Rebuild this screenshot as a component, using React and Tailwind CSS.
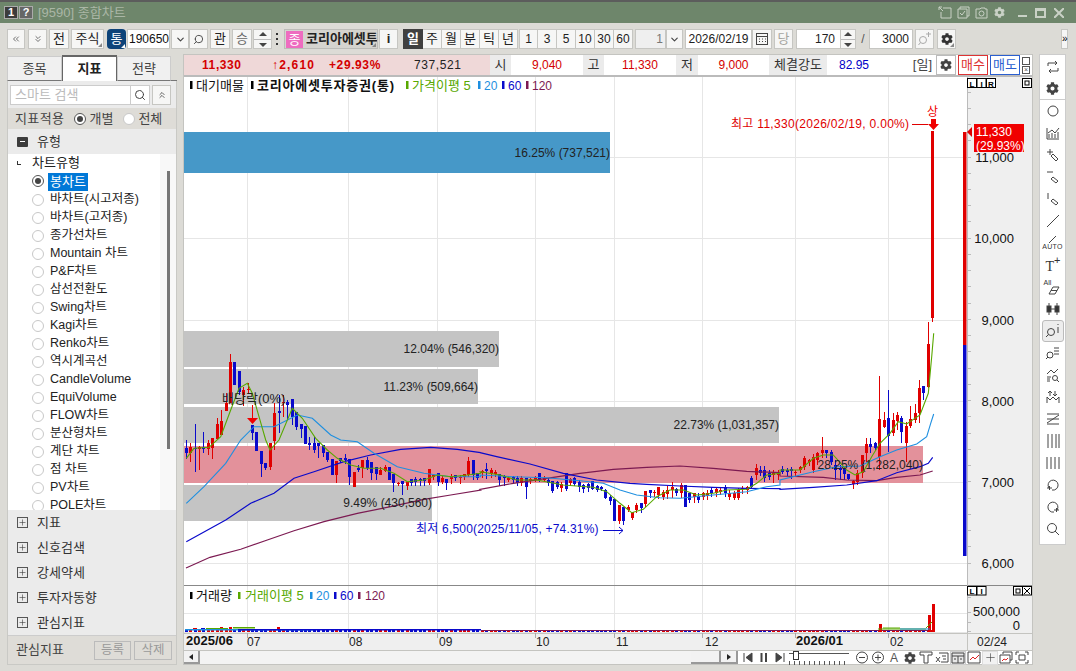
import React from "react";
import { FaCog } from "react-icons/fa";
import { twMerge } from "tailwind-merge";
import { ChevronDown, ChevronsDown, ChevronsLeft, ChevronsUp, Search, Plus } from "lucide-react";

// [red?, bodyTop, bodyBottom, wickTop, wickBottom]
const candles = [
  [0,448,453,440,459],[1,447,453,443,462],[0,448,449,424,472],[1,447,449,446,470],[0,447,449,432,453],
  [1,443,449,440,455],[1,438,448,438,459],[1,424,439,418,439],[1,421,435,410,435],[1,403,411,393,411],
  [1,362,403,354,403],[0,362,385,362,385],[0,371,392,371,395],[1,390,395,387,406],[1,389,390,383,393],
  [0,425,433,425,440],[0,432,451,432,451],[0,451,464,451,477],[0,463,468,463,470],[1,443,467,443,470],
  [1,413,441,403,450],[0,411,413,395,433],[1,402,403,395,417],[0,402,405,400,420],[0,399,417,399,425],
  [0,412,427,412,430],[0,424,429,424,438],[0,426,444,426,444],[0,443,445,437,450],[0,443,450,437,453],
  [0,443,446,443,458],[0,445,453,445,457],[0,452,460,452,462],[0,459,475,459,475],[1,461,475,461,483],
  [0,458,461,458,463],[0,458,460,454,464],[0,459,477,459,485],[1,472,487,472,487],[0,468,470,465,472],
  [1,460,468,460,478],[0,460,468,457,470],[0,462,473,462,480],[0,467,474,467,480],[1,470,475,467,475],
  [1,467,471,465,472],[0,467,480,467,480],[0,474,483,474,492],[1,483,484,482,486],[0,481,484,481,495],
  [1,482,486,482,490],[0,479,483,479,486],[0,479,482,477,486],[0,479,481,478,486],[0,478,481,478,486],
  [1,469,483,469,485],[1,475,477,474,480],[0,473,482,473,486],[1,478,482,476,484],[0,479,483,479,490],
  [1,476,479,474,484],[0,475,478,475,481],[1,477,478,475,484],[1,474,477,474,480],[1,461,475,457,477],
  [0,460,475,460,480],[0,473,478,473,480],[1,471,473,470,478],[0,469,471,463,479],[1,470,474,468,478],
  [1,472,474,470,477],[0,474,480,474,486],[0,476,478,475,486],[1,478,480,476,482],[0,477,480,476,483],
  [0,478,483,476,486],[1,478,483,476,486],[0,478,487,478,499],[1,479,481,478,484],[1,477,480,476,482],
  [0,473,479,473,482],[1,478,480,476,482],[0,480,483,478,486],[0,481,491,481,493],[0,482,487,481,489],
  [1,484,488,482,492],[0,473,489,473,491],[1,479,483,478,486],[0,478,484,477,486],[0,482,487,480,492],
  [0,485,489,484,493],[0,484,488,483,492],[0,481,489,481,490],[0,486,490,485,492],[0,487,489,486,491],
  [0,490,498,489,499],[0,497,501,495,505],[0,499,521,499,521],[1,505,521,505,524],[0,507,521,507,525],
  [1,507,510,505,512],[1,512,518,512,520],[1,505,510,503,513],[0,503,508,503,513],[1,491,504,491,507],
  [0,490,493,490,498],[1,492,493,490,497],[1,487,495,487,499],[1,492,497,490,500],[1,490,494,486,499],
  [1,487,490,482,498],[0,489,493,488,496],[1,485,493,483,498],[0,485,507,485,507],[0,493,500,493,503],
  [1,493,497,493,503],[0,496,500,493,503],[1,493,497,492,500],[1,493,496,490,500],[0,490,493,487,497],
  [1,489,493,487,497],[1,490,492,487,495],[0,487,493,485,497],[1,493,497,490,500],[1,493,498,491,500],
  [1,490,498,488,500],[1,488,489,486,494],[1,487,490,486,494],[0,478,487,476,488],[1,468,475,464,480],
  [0,470,473,466,476],[0,470,478,466,482],[0,473,477,470,480],[1,473,475,470,483],[1,472,475,470,480],
  [0,469,472,466,474],[0,470,472,468,476],[0,469,471,467,479],[1,472,473,470,476],[1,467,470,466,473],
  [1,458,467,456,470],[1,460,462,459,466],[1,457,470,454,473],[1,453,460,452,465],[1,450,453,437,458],
  [0,450,453,450,458],[0,452,462,450,465],[0,465,470,460,480],[0,468,470,465,480],[0,469,474,466,480],
  [0,474,479,474,480],[1,481,484,480,489],[1,473,482,470,485],[1,455,473,455,478],[1,444,453,438,462],
  [0,444,447,438,453],[0,443,448,442,450],[1,419,457,376,470],[1,420,427,412,428],[0,418,436,390,452],
  [1,420,433,413,436],[1,415,421,412,430],[0,418,432,416,443],[1,426,443,422,462],[1,419,426,406,428],
  [1,413,420,404,423],[1,388,413,380,423],[0,386,393,386,400],[1,344,387,322,388],[1,131,318,131,322],
];

const candleX = (i) => 186.3 + i * 4.417;

const line = (a, ox, oy) => a.map(([x, y]) => `${(ox + x / 3).toFixed(1)},${(oy + y / 3).toFixed(1)}`).join(" ");

const ma5 = [
  line([[7,355],[30,325],[75,322],[110,290],[140,210],[165,145],[190,130],[205,160],[225,230],[245,300],[258,330],[285,300],[325,205],[355,235],[395,295],[430,330],[460,355],[500,375],[540,385],[590,385],[630,400],[670,425],[720,420],[760,405],[800,410],[850,405],[890,400]], 184, 340),
  line([[0,125],[60,135],[110,150],[170,150],[250,165],[340,172],[380,185],[420,220],[455,248],[490,238],[530,200],[570,180],[610,180],[650,195],[700,190],[740,180],[800,178],[830,160],[860,135],[900,130]], 480, 430),
  line([[0,510],[60,510],[100,475],[130,465],[160,465],[200,510],[225,525],[250,515],[275,470],[300,430],[330,400],[355,365],[380,372],[420,345],[445,280],[455,170],[461,100]], 780, 300),
].join(" ");
const ma20 = [
  line([[7,490],[60,440],[125,370],[170,300],[210,260],[270,260],[340,225],[385,235],[440,285],[470,300],[520,305],[570,340],[640,380],[720,400],[800,410],[890,410]], 184, 340),
  line([[0,135],[100,140],[200,143],[300,152],[370,160],[420,180],[470,195],[540,203],[600,205],[700,195],[800,185],[860,170],[900,165]], 480, 430),
  line([[0,540],[100,515],[170,500],[240,498],[300,470],[350,450],[410,432],[440,410],[452,370],[461,342]], 780, 300),
].join(" ");
const ma60 = [
  line([[7,605],[125,540],[200,490],[270,460],[330,415],[390,395],[480,365],[560,345],[650,328],[740,322],[820,328],[890,338]], 184, 340),
  line([[0,68],[50,80],[150,102],[250,130],[350,150],[450,160],[500,163],[600,168],[700,172],[800,175],[900,176]], 480, 430),
  line([[0,568],[100,562],[200,555],[290,542],[350,518],[420,500],[445,490],[458,472]], 780, 300),
].join(" ");
const ma120 = [
  line([[6,684],[78,652],[170,628],[250,600],[330,572],[420,545],[520,520],[620,500],[720,478],[800,465],[890,450]], 184, 340),
  line([[0,178],[100,160],[200,145],[300,130],[400,118],[500,112],[600,108],[700,115],[800,124],[900,128]], 480, 430),
  line([[0,528],[130,532],[200,540],[290,542],[350,532],[420,525],[458,513]], 780, 300),
].join(" ");

const monthLines = [247, 348, 437, 535, 614, 702, 795, 888];
const priceLines = [157, 238, 320, 401, 482, 563];
const priceLabels = [["11,000", 157], ["10,000", 238], ["9,000", 320], ["8,000", 401], ["7,000", 482], ["6,000", 563]];

const bars = [
  { y: 132, h: 41, x2: 610, fill: "#4698c8", label: "16.25% (737,521)" },
  { y: 331, h: 36, x2: 499, fill: "#c4c4c4", label: "12.04% (546,320)" },
  { y: 369, h: 35, x2: 478, fill: "#c4c4c4", label: "11.23% (509,664)" },
  { y: 407, h: 36, x2: 779, fill: "#c4c4c4", label: "22.73% (1,031,357)" },
  { y: 446, h: 37, x2: 923, fill: "#e3919b", label: "28.25% (1,282,040)" },
  { y: 485, h: 36, x2: 432, fill: "#c4c4c4", label: "9.49% (430,560)" },
];

const chartTypes = ["바차트(시고저종)", "바차트(고저종)", "종가선차트", "Mountain 차트", "P&F차트", "삼선전환도", "Swing차트", "Kagi차트", "Renko차트", "역시계곡선", "CandleVolume", "EquiVolume", "FLOW차트", "분산형차트", "계단 차트", "점 차트", "PV차트", "POLE차트"];
const groups = ["지표", "신호검색", "강세약세", "투자자동향", "관심지표"];
const periods = ["주", "월", "분", "틱", "년"];
const minutes = ["1", "3", "5", "10", "30", "60"];

const Corner = ({ color = "#888" }) => (
  <span
    className="absolute right-[1px] bottom-[1px] w-0 h-0 border-l-[4px] border-l-transparent border-b-[4px]"
    style={{ borderBottomColor: color }}
  />
);

const Btn = ({ className = "", children }) => (
  <div className={twMerge("relative h-[20px] flex items-center justify-center bg-[#f6f6f5] border border-[#c6c6c2] text-[13px] text-[#222] shrink-0", className)}>
    {children}
  </div>
);

const Radio = ({ on }) => (
  <span className={`w-[12px] h-[12px] rounded-full border flex items-center justify-center shrink-0 bg-white ${on ? "border-[#555]" : "border-[#c8c8c8]"}`}>
    {on && <span className="w-[6px] h-[6px] rounded-full bg-[#444]" />}
  </span>
);

const Ico = ({ children }) => (
  <svg width="18" height="18" viewBox="0 0 18 18" fill="none" stroke="#444" strokeWidth="1">
    {children}
  </svg>
);

const railIcons = [
  <Ico><path d="M4 8V5h9M11 3l2 2-2 2M14 10v3H5M7 15l-2-2 2-2" /></Ico>,
  <FaCog size={13} color="#444" />,
  <Ico><circle cx="9" cy="9" r="5" /></Ico>,
  <Ico><path d="M3 4v11h12M5 14V10M8 14V9M11 14v-4M14 14V8M4 9l4-3 3 3 4-5" /></Ico>,
  <Ico><path d="M3 6h6M6 3v6M9 8l5 5-2 2-5-5z" /></Ico>,
  <Ico><path d="M3 4h6M9 9l5 4-2 2-5-4z" /></Ico>,
  <Ico><path d="M4 3v6M9 9l5 4-2 2-5-4z" /></Ico>,
  <Ico><path d="M3 15L15 3" /></Ico>,
  <div className="flex flex-col items-center">
    <svg width="14" height="7" viewBox="0 0 14 7" stroke="#444"><path d="M3 7l7-7" /></svg>
    <span className="text-[7px] leading-[7px] tracking-[0.3px] text-[#333]">AUTO</span>
  </div>,
  <div className="relative w-[18px] h-[18px]">
    <span className="absolute left-[2px] top-[3px] text-[14px] leading-[15px] font-['Liberation_Serif',serif] text-[#333]">T</span>
    <span className="absolute right-[1px] top-[-2px] text-[11px] leading-[12px] text-[#333]">+</span>
  </div>,
  <div className="flex flex-col w-[18px]">
    <span className="text-[7px] leading-[7px] text-[#333]">All</span>
    <svg width="18" height="9" viewBox="0 0 18 9" fill="none" stroke="#444"><path d="M5 8l4-7h6l-4 7zM7 4.5h6" /></svg>
  </div>,
  <Ico><path d="M5 3v12M13 3v12" /><rect x="3" y="6" width="4" height="6" fill="#333" /><rect x="11" y="6" width="4" height="6" fill="#333" /><path d="M7 9h4" /></Ico>,
  <Ico><circle cx="7" cy="10" r="3.5" /><path d="M4.5 12.5L2 15M14 2v1M14 5v6" /></Ico>,
  <Ico><circle cx="6" cy="11" r="3" /><path d="M4 13l-2 2M10 4h5M10 7h5M10 10h5" /></Ico>,
  <Ico><path d="M3 8l4-4 3 3 4-4M3 11h4M3 13h3M3 15h3" /><circle cx="11" cy="12" r="2.5" /><path d="M13 14l2 2" /></Ico>,
  <Ico><path d="M3 15V9l3 3 3-3 3 3 3-3v6M6 3v5M4 5l2-2 2 2M11 8V3M9 6l2 2 2-2" /></Ico>,
  <Ico><path d="M3 4h12M3 14h12M3 9h12M3 13L15 5" /></Ico>,
  <Ico><path d="M4 2v14M8 2v14M12 2v14M15 2v14" /></Ico>,
  <Ico><path d="M3 3v12M7 3v12M11 3v12M15 3v12" /></Ico>,
  <Ico><path d="M5 12a5 5 0 1 1 3 2M3 12h5M5.500 10v4" /></Ico>,
  <Ico><path d="M13 12a5 5 0 1 0-3 2M10 12h5M12.500 10v4" /></Ico>,
  <Ico><circle cx="8" cy="8" r="4.500" /><path d="M11 11l4 4" /></Ico>,
];

const IndicatorRow = ({ label, icon }) => (
  <div className="h-[25px] flex items-center pl-[9px] gap-[9px] text-[13px] text-[#333]">
    {icon}
    <span>{label}</span>
  </div>
);

const PlusBox = () => (
  <span className="w-[11px] h-[11px] border border-[#555] flex items-center justify-center">
    <Plus size={9} strokeWidth={1.5} color="#333" />
  </span>
);

const ScrollIcon = ({ children, className = "" }) => (
  <div className={`w-[16px] h-[14px] flex items-center justify-center shrink-0 ${className}`}>{children}</div>
);

const SmallIco = ({ children }) => (
  <svg width="14" height="13" viewBox="0 0 14 13" fill="none" stroke="#444" strokeWidth="1">
    {children}
  </svg>
);

const App = () => {
  return (
    <div className="w-[1076px] h-[671px] overflow-hidden bg-[#dcdbd6] flex flex-col font-['Liberation_Sans','Noto_Sans_CJK_KR',sans-serif] select-none">
      {/* title bar */}
      <div className="h-[23px] shrink-0 bg-[#6e866b] border-t-2 border-[#5c5c5c] flex items-center pl-[4px] pr-[12px]">
        <span className="w-[14px] h-[13px] bg-[#3c3c3c] border border-[#aaa] text-white text-[11px] font-bold leading-[11px] text-center">1</span>
        <span className="ml-[1px] w-[14px] h-[13px] bg-[#666] border border-[#aaa] text-white text-[11px] font-bold leading-[11px] text-center">?</span>
        <span className="ml-[5px] text-[13px] text-[#aab6a6]">[9590] 종합차트</span>
        <div className="ml-auto flex items-center text-[#c9d1c6]">
          <svg width="14" height="13" viewBox="0 0 14 13" fill="none" stroke="currentColor"><path d="M1 1h3M1 1v3M1 1l4 4M5 2h8v10H3V6" /></svg>
          <svg className="ml-[5px]" width="13" height="13" viewBox="0 0 13 13" fill="none" stroke="currentColor"><path d="M3 3V1h9v9h-2M1 3h9v9H1zM3 7l2 2 3-4" /></svg>
          <svg className="ml-[5px]" width="13" height="13" viewBox="0 0 13 13" fill="none" stroke="currentColor"><path d="M1 3h4l1-1h4v1h2v9H1z" /><circle cx="6.500" cy="7.500" r="2.500" /></svg>
          <FaCog className="ml-[6px]" size={11} />
          <span className="ml-[13px] mt-[7px] w-[9px] h-[2px] bg-current" />
          <span className="ml-[8px] w-[11px] h-[10px] border-2 border-t-[3px] border-current" />
          <svg className="ml-[8px]" width="10" height="10" viewBox="0 0 10 10" stroke="currentColor" strokeWidth="2"><path d="M0 0l10 10M10 0L0 10" /></svg>
        </div>
      </div>

      {/* toolbar */}
      <div className="h-[31px] shrink-0 flex items-start pt-[6px] pl-[7px]">
        <Btn className="w-[18px]"><ChevronsLeft size={10} color="#555" /></Btn>
        <Btn className="w-[19px] ml-[3px]"><ChevronsDown size={10} color="#555" /></Btn>
        <Btn className="w-[20px] ml-[2px]">전</Btn>
        <Btn className="w-[33px] ml-[2px]">주식<Corner /></Btn>
        <div className="relative w-[19px] h-[20px] ml-[3px] rounded-[4px] bg-[#0d4379] text-white text-[13px] flex items-center justify-center shrink-0">통<Corner color="#fff" /></div>
        <Btn className="w-[43px] ml-[1px] bg-white justify-start pl-[1px] text-[12px] text-[#111]">190650</Btn>
        <Btn className="w-[18px] ml-[1px]"><ChevronDown size={11} color="#444" strokeWidth={2.5} /></Btn>
        <Btn className="w-[19px]"><Search size={11} color="#444" className="-scale-x-100" /></Btn>
        <Btn className="w-[20px] ml-[2px]">관</Btn>
        <Btn className="w-[20px] ml-[2px] text-[#666]">승</Btn>
        <div className="w-[19px] h-[20px] ml-[1px] bg-[#f6f6f5] border border-[#c6c6c2] flex flex-col items-center justify-center gap-[3px] shrink-0">
          <span className="w-0 h-0 border-x-[4px] border-x-transparent border-b-[4px] border-b-[#444]" />
          <span className="w-[17px] h-[1px] bg-[#bbb]" />
          <span className="w-0 h-0 border-x-[4px] border-x-transparent border-t-[4px] border-t-[#444]" />
        </div>
        <div className="w-[8px] ml-[1px] h-[20px] flex flex-col items-center justify-center gap-[3px] shrink-0">
          <span className="w-[2px] h-[2px] bg-[#333]" />
          <span className="w-[2px] h-[2px] bg-[#333]" />
          <span className="w-[2px] h-[2px] bg-[#333]" />
        </div>
        <div className="relative w-[94px] h-[20px] ml-[3px] bg-[#d5d4cf] border border-[#bcbcb8] flex items-center overflow-hidden shrink-0">
          <span className="w-[17px] h-[17px] ml-[1px] bg-[#ee6cc0] text-white text-[13px] leading-[17px] text-center shrink-0">종</span>
          <span className="ml-[3px] text-[13px] font-bold text-[#222] whitespace-nowrap">코리아에셋투</span>
          <Corner />
        </div>
        <Btn className="w-[19px] ml-[1px] font-bold">i</Btn>
        <div className="w-[20px] h-[20px] ml-[5px] bg-[#404040] text-white text-[13px] font-bold flex items-center justify-center shrink-0">일</div>
        {periods.map((p) => (
          <Btn key={p} className="w-[19px] border-l-0">{p}</Btn>
        ))}
        {minutes.map((m, i) => (
          <Btn key={m} className={`w-[19px] text-[12px] ${i === 0 ? "ml-[1px]" : "border-l-0"}`}>{m}</Btn>
        ))}
        <div className="w-[31px] h-[20px] ml-[2px] bg-[#efefef] border border-[#c6c6c2] text-[12px] text-[#777] text-right pr-[2px] leading-[18px] shrink-0">1</div>
        <Btn className="w-[17px]"><ChevronDown size={11} color="#444" strokeWidth={2.5} /></Btn>
        <Btn className="w-[67px] ml-[2px] bg-white text-[12px]">2026/02/19</Btn>
        <Btn className="w-[20px]">
          <svg width="12" height="12" viewBox="0 0 12 12" fill="none" stroke="#444"><rect x="0.500" y="0.500" width="11" height="11" /><path d="M0 3.500h12M3 6h1M6 6h1M9 6h1M3 8.500h1M6 8.500h1M9 8.500h1" /></svg>
        </Btn>
        <Btn className="w-[19px] ml-[2px] text-[#a5a59f]">당</Btn>
        <Btn className="w-[45px] ml-[3px] bg-white justify-end pr-[5px] text-[12px]">170</Btn>
        <div className="w-[15px] h-[20px] bg-[#f6f6f5] border border-[#c6c6c2] border-l-0 flex flex-col items-center justify-center gap-[3px] shrink-0">
          <span className="w-0 h-0 border-x-[4px] border-x-transparent border-b-[4px] border-b-[#444]" />
          <span className="w-[14px] h-[1px] bg-[#bbb]" />
          <span className="w-0 h-0 border-x-[4px] border-x-transparent border-t-[4px] border-t-[#444]" />
        </div>
        <span className="w-[12px] ml-[1px] text-center text-[12px] leading-[20px] text-[#555]">/</span>
        <Btn className="w-[44px] bg-white justify-end pr-[3px] text-[12px]">3000</Btn>
        <Btn className="w-[19px] ml-[2px] text-[#aaa]">
          <svg width="14" height="14" viewBox="0 0 14 14" fill="none" stroke="#aaa"><circle cx="5" cy="8" r="3.500" /><path d="M2.500 10.500L0.500 13M8 2h5M10.500 0v5" /></svg>
        </Btn>
        <Btn className="w-[19px] ml-[3px]"><FaCog size={12} color="#333" /><Corner /></Btn>
        <div className="w-[7px] h-[20px] ml-[105px] bg-[#f6f6f5] border border-[#c6c6c2] text-[10px] leading-[17px] text-center shrink-0">»</div>
      </div>

      {/* body */}
      <div className="flex-1 flex min-h-0 pb-[6px]">
        {/* left panel */}
        <div className="ml-[7px] w-[170px] flex flex-col shrink-0">
          <div className="h-[27px] flex items-end shrink-0">
            <div className="w-[55px] h-[25px] bg-[#f0f0f0] border border-[#ccc] border-b-[#777] text-[13px] text-[#444] flex items-center justify-center">종목</div>
            <div className="w-[55px] h-[26px] bg-white border-x border-t-2 border-[#666] text-[13px] font-bold text-[#222] flex items-center justify-center">지표</div>
            <div className="w-[54px] h-[25px] bg-[#f0f0f0] border border-[#ccc] border-b-[#777] text-[13px] text-[#444] flex items-center justify-center">전략</div>
            <div className="flex-1 h-[1px] bg-[#777]" />
          </div>
          <div className="flex-1 bg-[#ebebeb] border-x border-b border-[#c9c9c5] flex flex-col min-h-0">
            <div className="h-[27px] pt-[4px] pl-[2px] flex items-start shrink-0">
              <div className="w-[121px] h-[20px] bg-white border border-[#ccc] text-[13px] text-[#bbb] pl-[4px] leading-[18px]">스마트 검색</div>
              <div className="w-[19px] h-[20px] bg-white border border-l-0 border-[#ccc] flex items-center justify-center">
                <Search size={12} color="#444" />
              </div>
              <Btn className="w-[19px] ml-[2px]"><ChevronsUp size={10} color="#444" /></Btn>
            </div>
            <div className="h-[21px] bg-[#dedcd7] flex items-center pl-[7px] text-[13px] text-[#444] shrink-0">
              <span className="tracking-[0.4px]">지표적용</span>
              <span className="ml-[10px]"><Radio on /></span>
              <span className="ml-[3px]">개별</span>
              <span className="ml-[10px]"><Radio /></span>
              <span className="ml-[3px]">전체</span>
            </div>
            <IndicatorRow
              label="유형"
              icon={
                <span className="w-[11px] h-[10px] bg-[#3c3c3c] rounded-[1px] flex items-center justify-center">
                  <span className="w-[5px] h-[1px] bg-white" />
                </span>
              }
            />
            <div className="h-[356px] bg-[#f8f8f8] flex overflow-hidden shrink-0">
              <div className="w-[152px] bg-white shrink-0">
                <div className="h-[18px] pl-[9px] flex items-center text-[13px] text-[#222]">
                  <span className="w-[4px] h-[4px] border-l border-b border-[#333] mr-[11px]" />
                  <span>차트유형</span>
                </div>
                <div className="h-[18px] pl-[24px] flex items-center gap-[4px]">
                  <Radio on />
                  <span className="bg-[#0078d7] text-white text-[13px] leading-[18px] pl-[2px] mt-[1px] w-[40px]">봉차트</span>
                </div>
                {chartTypes.map((t) => (
                  <div key={t} className="h-[18px] pt-[1px] pl-[24px] flex items-center gap-[6px] text-[12.500px] text-[#222] whitespace-nowrap">
                    <Radio />
                    <span>{t}</span>
                  </div>
                ))}
              </div>
              <div className="ml-[7px] mt-[17px] w-[3px] h-[278px] bg-[#777]" />
            </div>
            {groups.map((g) => (
              <IndicatorRow key={g} label={g} icon={<PlusBox />} />
            ))}
            <div className="flex-1 bg-[#dedcd7] border-t border-[#ccc] flex items-center pl-[8px] text-[13px] text-[#444]">
              <span>관심지표</span>
              <div className="ml-auto mr-[4px] flex gap-[3px]">
                <div className="w-[37px] h-[19px] border border-[#bbb] text-[12.500px] text-[#999] flex items-center justify-center">등록</div>
                <div className="w-[38px] h-[19px] border border-[#bbb] text-[12.500px] text-[#999] flex items-center justify-center">삭제</div>
              </div>
            </div>
          </div>
        </div>

        {/* chart */}
        <div className="ml-[6px] w-[850px] flex flex-col shrink-0 border-x border-[#c4c4c0] bg-white">
          <div className="h-[23px] shrink-0 flex items-stretch border-t border-b-2 border-t-[#c4c4c0] border-b-[#bbb] bg-white text-[12px] whitespace-nowrap">
            <div className="w-[306px] bg-[#efd8d8] relative font-bold text-[#d40000] tracking-[0.6px] flex items-center shrink-0">
              <span className="ml-[18px] w-[46px]">11,330</span>
              <span className="ml-[24px] w-[52px] tracking-[1.200px]">↑2,610</span>
              <span className="ml-[5px] w-[52px]">+29.93%</span>
              <span className="ml-[33px] font-normal text-[#222]">737,521</span>
            </div>
            <div className="w-[21px] bg-[#ebebeb] flex items-center justify-center text-[13px] text-[#333] shrink-0">시</div>
            <div className="w-[72px] flex items-center justify-center text-[#d40000] shrink-0">9,040</div>
            <div className="w-[21px] bg-[#ebebeb] flex items-center justify-center text-[13px] text-[#333] shrink-0">고</div>
            <div className="w-[72px] flex items-center justify-center text-[#d40000] shrink-0">11,330</div>
            <div className="w-[22px] bg-[#ebebeb] flex items-center justify-center text-[13px] text-[#333] shrink-0">저</div>
            <div className="w-[71px] flex items-center justify-center text-[#d40000] shrink-0">9,000</div>
            <div className="w-[58px] bg-[#ebebeb] flex items-center justify-center text-[13px] text-[#333] shrink-0">체결강도</div>
            <div className="w-[54px] flex items-center justify-center text-[#0000c8] shrink-0">82.95</div>
            <div className="flex-1 flex items-center justify-end pr-[4px] text-[13px] text-[#444]">[일]</div>
            <div className="w-[20px] h-[20px] self-center bg-white border border-[#bbb] flex items-center justify-center shrink-0"><FaCog size={12} color="#444" /></div>
            <div className="w-[30px] h-[20px] self-center ml-[2px] border border-[#d33] text-[#d33] text-[13px] flex items-center justify-center shrink-0">매수</div>
            <div className="w-[30px] h-[20px] self-center ml-[2px] border border-[#2b5fd0] text-[#2b5fd0] text-[13px] flex items-center justify-center shrink-0">매도</div>
            <div className="w-[12px] flex flex-col items-center justify-center gap-[1px] shrink-0">
              <span className="w-[8px] h-[8px] border border-[#555]" />
              <span className="w-[8px] h-[8px] border border-[#555] text-[7px] leading-[6px] text-center text-[#555]">×</span>
            </div>
          </div>

          {/* price pane */}
          <svg className="block shrink-0" width="848" height="508" viewBox="184 77 848 508">
            <rect x="184" y="77" width="848" height="508" fill="#fff" />
            <rect x="967" y="77" width="65" height="508" fill="#efefef" />
            {priceLines.map((y) => <path key={y} d={`M184 ${y}.5H967`} stroke="#e6e6e6" />)}
            {monthLines.map((x) => <path key={x} d={`M${x}.5 77V585`} stroke="#e6e6e6" />)}
            <path d="M967.500 77V585" stroke="#bbb" />
            {Array.from({ length: 30 }, (_, i) => (
              <path key={i} d={`M967 ${(156.5 + (i - 4) * 16.24).toFixed(0)}.5h4`} stroke="#bbb" />
            ))}

            {bars.map((b) => (
              <rect key={b.y} x="184" y={b.y} width={b.x2 - 184} height={b.h} fill={b.fill} />
            ))}

            {candles.map(([red, t, b, wt, wb], i) => {
              const x = candleX(i);
              const c = red ? "#e00000" : "#0a0acb";
              return (
                <g key={i} shapeRendering="crispEdges">
                  <rect x={x - 0.5} y={wt} width="1" height={wb - wt} fill={c} />
                  <rect x={x - 1.5} y={t} width="3" height={Math.max(b - t, 1)} fill={c} />
                </g>
              );
            })}

            <polyline points={ma120} fill="none" stroke="#7c1a52" strokeWidth="1.2" />
            <polyline points={ma60} fill="none" stroke="#0a0acb" strokeWidth="1.2" />
            <polyline points={ma20} fill="none" stroke="#1e8fe0" strokeWidth="1.1" />
            <polyline points={ma5} fill="none" stroke="#58a800" strokeWidth="1.1" />

            {bars.map((b) => (
              <text key={b.y} x={b.x2} y={b.y + b.h / 2 + 4} textAnchor="end" fontSize="12" fill="#222">{b.label}</text>
            ))}

            {/* legend */}
            <rect x="190" y="81" width="2.500" height="8" fill="#000" />
            <text x="196" y="90" fontSize="13" fill="#111">대기매물</text>
            <rect x="251" y="81" width="2.500" height="8" fill="#000" />
            <text x="257" y="90" fontSize="13" fontWeight="700" letterSpacing="0.8" fill="#111">코리아에셋투자증권(통)</text>
            <rect x="406" y="81" width="2.500" height="8" fill="#58a800" />
            <text x="412" y="90" fontSize="13" fill="#58a800">가격이평 5</text>
            <rect x="478" y="81" width="2.500" height="8" fill="#1e8fe0" />
            <text x="484" y="90" fontSize="12" fill="#1e8fe0">20</text>
            <rect x="502" y="81" width="2.500" height="8" fill="#0a0acb" />
            <text x="508" y="90" fontSize="12" fill="#0a0acb">60</text>
            <rect x="526" y="81" width="2.500" height="8" fill="#7c1a52" />
            <text x="532" y="90" fontSize="12" fill="#7c1a52">120</text>

            {/* annotations */}
            <text x="222" y="403" fontSize="13" fill="#222">배당락(0%)</text>
            <path d="M252.500 405V418" stroke="#f00000" />
            <path d="M247 418h11l-5.500 6z" fill="#f00000" />
            <text x="731" y="128" fontSize="12" letterSpacing="0.3" fill="#e00000">최고 11,330(2026/02/19, 0.00%)</text>
            <path d="M912 124.500H928" stroke="#e00000" />
            <text x="927" y="116" fontSize="12" fill="#f00000">상</text>
            <path d="M931 119h5v5h3l-5.500 6-5.500-6h3z" fill="#f00000" />
            <text x="416" y="533" fontSize="12" letterSpacing="0.2" fill="#0a0acb">최저 6,500(2025/11/05, +74.31%)</text>
            <path d="M603 530.500H623M619 527l4 3.500-4 3.500" stroke="#0a0acb" fill="none" />

            {/* right-hand range bar */}
            <rect x="963" y="132" width="3.500" height="213" fill="#e00000" />
            <rect x="963" y="345" width="3.500" height="211" fill="#0a0acb" />
            <path d="M967 132l5-5v10z" fill="#e00000" />
            <rect x="974" y="124" width="50" height="28" fill="#f00000" />
            <text x="976" y="136" fontSize="12" fill="#fff">11,330</text>
            <text x="976" y="150" fontSize="12" fill="#fff">(29.93%)</text>

            {priceLabels.map(([t, y]) => (
              <text key={t} x="1014" y={y + 5} textAnchor="end" fontSize="13" fill="#111">{t}</text>
            ))}

            {/* L I R boxes */}
            {["L", "I", "R"].map((t, i) => (
              <g key={t}>
                <rect x={967.5 + i * 9.5} y="78.500" width="9" height="9" fill="#fff" stroke="#000" />
                <text x={972 + i * 9.5} y="86.500" textAnchor="middle" fontSize="8" fontWeight="700" fill="#000">{t}</text>
              </g>
            ))}
            <rect x="1022.500" y="78.500" width="9" height="9" fill="#fff" stroke="#000" />
            <rect x="1025" y="81" width="4" height="4" fill="none" stroke="#000" />
          </svg>

          {/* volume pane */}
          <svg className="block shrink-0" width="848" height="48" viewBox="184 585 848 48">
            <rect x="184" y="585" width="848" height="48" fill="#fff" />
            <rect x="967" y="585" width="65" height="48" fill="#efefef" />
            {monthLines.map((x) => <path key={x} d={`M${x}.5 586V633`} stroke="#e6e6e6" />)}
            <path d="M184 613.500H967M184 632.500H967" stroke="#e6e6e6" />
            <path d="M184 585.500H1032" stroke="#888" />
            <path d="M967.500 585V633" stroke="#bbb" />
            <path d="M967 597.500h4M967 612.500h4M967 622.500h4M967 631.500h4" stroke="#bbb" />

            <rect x="190" y="592" width="2.500" height="7" fill="#000" />
            <text x="196" y="600" fontSize="13" fill="#111">거래량</text>
            <rect x="238" y="592" width="2.500" height="7" fill="#58a800" />
            <text x="245" y="600" fontSize="13" fill="#58a800">거래이평 5</text>
            <rect x="310" y="592" width="2.500" height="7" fill="#1e8fe0" />
            <text x="316" y="600" fontSize="12" fill="#1e8fe0">20</text>
            <rect x="334" y="592" width="2.500" height="7" fill="#0a0acb" />
            <text x="340" y="600" fontSize="12" fill="#0a0acb">60</text>
            <rect x="358" y="592" width="2.500" height="7" fill="#7c1a52" />
            <text x="365" y="600" fontSize="12" fill="#7c1a52">120</text>

            {candles.map(([red], i) => (
              <rect key={i} x={candleX(i) - 1.5} y="630" width="3" height="2" fill={red ? "#e00000" : "#0a0acb"} shapeRendering="crispEdges" />
            ))}
            <rect x="193" y="628" width="4" height="2" fill="#e00000" />
            <rect x="201" y="628" width="4" height="2" fill="#0a0acb" />
            <rect x="206" y="628" width="4" height="2" fill="#e00000" />
            <rect x="220" y="627" width="3" height="3" fill="#e00000" />
            <rect x="229" y="627" width="3" height="3" fill="#e00000" />
            <rect x="277" y="627" width="3" height="3" fill="#e00000" />
            <rect x="206" y="628" width="22" height="1.500" fill="#58a800" />
            <rect x="233" y="627" width="22" height="1.500" fill="#58a800" />
            <rect x="185" y="629" width="128" height="1.500" fill="#1e8fe0" />
            <rect x="238" y="629" width="243" height="1.500" fill="#0a0acb" />
            <rect x="481" y="630" width="449" height="1" fill="#7c1a52" />
            <rect x="879" y="624" width="3" height="8" fill="#e00000" />
            <rect x="928" y="615" width="3" height="17" fill="#e00000" />
            <rect x="932" y="604" width="3" height="28" fill="#e00000" />
            <path d="M878 629H900M883 628H900M900 629H926" stroke="#58a800" />
            <path d="M900 629H930" stroke="#1e8fe0" />
            <path d="M926 628l6-6" stroke="#58a800" />

            <text x="1020" y="616" textAnchor="end" fontSize="13" fill="#111">500,000</text>
            <text x="1020" y="630" textAnchor="end" fontSize="13" fill="#111">0</text>

            {["L", "I"].map((t, i) => (
              <g key={t}>
                <rect x={967.5 + i * 9.5} y="586.500" width="9" height="8.500" fill="#fff" stroke="#000" />
                <text x={972 + i * 9.5} y="594" textAnchor="middle" fontSize="8" fontWeight="700" fill="#000">{t}</text>
              </g>
            ))}
            <rect x="1013.500" y="586.500" width="9" height="8.500" fill="#fff" stroke="#000" />
            <rect x="1016" y="589" width="4" height="4" fill="none" stroke="#000" />
            <rect x="1022.500" y="586.500" width="9" height="8.500" fill="#fff" stroke="#000" />
            <path d="M1024 588l6 6M1030 588l-6 6" stroke="#000" />
          </svg>

          {/* time axis */}
          <svg className="block shrink-0" width="848" height="18" viewBox="184 633 848 18">
            <rect x="184" y="633" width="848" height="18" fill="#efefef" />
            <path d="M184 633.500H1032M184 650.500H1032" stroke="#c4c4c0" />
            <path d="M967.500 633V651" stroke="#c4c4c0" />
            {monthLines.map((x) => <path key={x} d={`M${x}.500 633v5`} stroke="#aaa" />)}
            <text x="186" y="645" fontSize="13" fontWeight="700" fill="#111">2025/06</text>
            <text x="247" y="646" fontSize="12" fill="#222">07</text>
            <text x="349" y="646" fontSize="12" fill="#222">08</text>
            <text x="439" y="646" fontSize="12" fill="#222">09</text>
            <text x="536" y="646" fontSize="12" fill="#222">10</text>
            <text x="616" y="646" fontSize="12" fill="#222">11</text>
            <text x="705" y="646" fontSize="12" fill="#222">12</text>
            <text x="796" y="645" fontSize="13" fontWeight="700" fill="#111">2026/01</text>
            <text x="890" y="646" fontSize="12" fill="#222">02</text>
            <text x="977" y="646" fontSize="12" fill="#222">02/24</text>
          </svg>

          {/* scroll row */}
          <div className="flex-1 flex items-stretch bg-white border-b border-[#c4c4c0] min-h-0">
            <div className="w-[16px] bg-[#f2f2f2] border-r-2 border-b-2 border-[#999] flex items-center justify-center shrink-0">
              <span className="w-0 h-0 border-y-[3px] border-y-transparent border-r-[4px] border-r-[#222]" />
            </div>
            <div className="w-[491px] bg-[#f3f3f3] shrink-0" />
            <div className="w-[30px] bg-[#f2f2f2] border-r-2 border-b-2 border-[#999] shrink-0" />
            <div className="w-[17px] bg-[#f2f2f2] border-r-2 border-b-2 border-[#999] flex items-center justify-center shrink-0">
              <span className="w-0 h-0 border-y-[3px] border-y-transparent border-l-[4px] border-l-[#222]" />
            </div>
            <div className="flex-1 flex items-center pl-[2px]">
              <ScrollIcon><SmallIco><path d="M3 2v9M11 2L5 6.500l6 4.500z" fill="#444" /></SmallIco></ScrollIcon>
              <ScrollIcon><SmallIco><path d="M4.500 2v9M9 2v9" strokeWidth="2" /></SmallIco></ScrollIcon>
              <ScrollIcon><SmallIco><path d="M11 2v9M3 2l6 4.500L3 11z" fill="#444" /></SmallIco></ScrollIcon>
              <div className="w-[60px] h-[14px] ml-[1px] relative shrink-0">
                <div className="absolute left-0 right-0 top-[2px] h-[1px] bg-[#555]" />
                <div className="absolute left-0 right-0 bottom-[0px] h-[4px] bg-[repeating-linear-gradient(90deg,#555_0,#555_1px,transparent_1px,transparent_5px)]" />
                <div className="absolute left-[4px] top-0 w-[6px] h-[9px] bg-white border border-[#333]" />
              </div>
              <div className="ml-[5px] flex items-center">
                <ScrollIcon><SmallIco><circle cx="7" cy="6.500" r="5.500" /><path d="M4 6.500h6" /></SmallIco></ScrollIcon>
                <ScrollIcon><SmallIco><circle cx="7" cy="6.500" r="5.500" /><path d="M4 6.500h6M7 3.500v6" /></SmallIco></ScrollIcon>
                <ScrollIcon><span className="text-[12px] leading-none text-[#555]">A</span></ScrollIcon>
                <ScrollIcon><FaCog size={12} color="#444" /></ScrollIcon>
                <ScrollIcon><SmallIco><path d="M1 1h12v3h-4v8H5V4H1z" /></SmallIco></ScrollIcon>
                <ScrollIcon><SmallIco><path d="M4 2h9v9H6M1 6l4 5M5 6l-4 5M7 5h4M8 8h3" /></SmallIco></ScrollIcon>
                <ScrollIcon className="bg-[#e8e8e8] border border-[#ccc]"><SmallIco><path d="M1 2h12v10H1zM1 5h12M7 5v7M3 8h2M9 8h2" /></SmallIco></ScrollIcon>
                <ScrollIcon><SmallIco><path d="M1 1h12v11H1z" /><path d="M3 9l3-3 2 2 4-4" stroke="#d22" /></SmallIco></ScrollIcon>
                <ScrollIcon className="bg-[#f2f2f2] border border-[#ddd]"><Plus size={13} color="#444" strokeWidth={1.2} /></ScrollIcon>
                <ScrollIcon><SmallIco><path d="M4 3V1h9v8h-2M1 4h10v8H1z" /><path d="M3 10l2-2 2 1 2-2" stroke="#d22" /></SmallIco></ScrollIcon>
                <ScrollIcon><SmallIco><path d="M1 4V1h3M10 1h3v3M13 9v3h-3M4 12H1V9M4 4h6v5H4z" /></SmallIco></ScrollIcon>
              </div>
            </div>
          </div>
        </div>

        {/* right tool rail */}
        <div className="ml-[6px] w-[27px] h-[491px] bg-white border border-[#ccc] pt-[1px] flex flex-col items-center shrink-0">
          {railIcons.map((icon, i) => (
            <div
              key={i}
              className={`h-[22px] flex items-center justify-center shrink-0 ${i === 12 ? "w-[22px] bg-[#ededed] border border-[#bbb] rounded-[3px]" : "w-[25px]"} ${i === 1 ? "border-b border-[#ccc]" : ""}`}
            >
              {icon}
            </div>
          ))}
        </div>
      </div>
    </div>
  );
};

export default App;
